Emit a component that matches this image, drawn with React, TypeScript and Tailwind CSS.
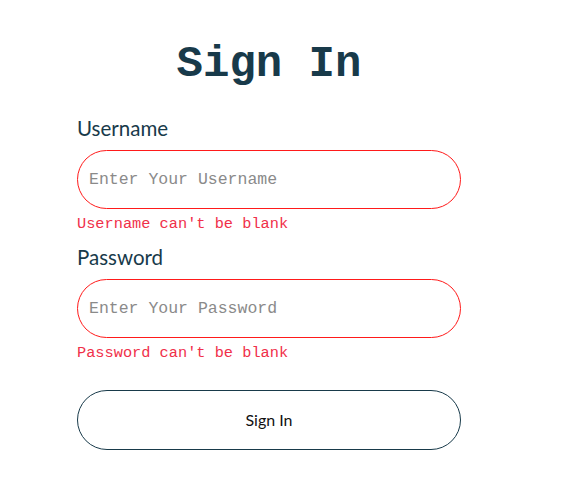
const mono = "font-['Liberation_Mono','Courier_New',monospace]";
const sans = "font-['Lato','Noto_Sans',sans-serif]";

function Field({
  label,
  placeholder,
  error,
  type = "text",
}: {
  label: string;
  placeholder: string;
  error: string;
  type?: string;
}) {
  return (
    <div className="flex flex-col">
      <label className={`${sans} text-[20.5px] leading-[24px] text-[#183a4a]`}>
        {label}
      </label>
      <input
        type={type}
        placeholder={placeholder}
        className={`${mono} mt-[10px] h-[59px] w-full rounded-full border border-[#ff1a1a] px-[11px] text-[16.5px] text-[#333] placeholder:text-[#8a8a8a] outline-none`}
      />
      <p className={`${mono} mt-[6px] text-[15.3px] leading-[18px] text-[#f0304a]`}>
        {error}
      </p>
    </div>
  );
}

export default function App() {
  return (
    <div className="min-h-[497px] bg-white">
      <form className="ml-[77px] w-[384px] pt-[40px] flex flex-col">
        <h1
          className={`${mono} text-center text-[44px] leading-[48px] font-bold text-[#183a4a]`}
        >
          Sign In
        </h1>
        <div className="mt-[28px] flex flex-col gap-[12px]">
          <Field
            label="Username"
            placeholder="Enter Your Username"
            error="Username can't be blank"
          />
          <Field
            label="Password"
            placeholder="Enter Your Password"
            error="Password can't be blank"
            type="password"
          />
        </div>
        <button
          type="button"
          className={`${sans} mt-[28px] h-[60px] w-full rounded-full border border-[#183a4a] bg-white text-[16px] text-[#111]`}
        >
          Sign In
        </button>
      </form>
    </div>
  );
}
